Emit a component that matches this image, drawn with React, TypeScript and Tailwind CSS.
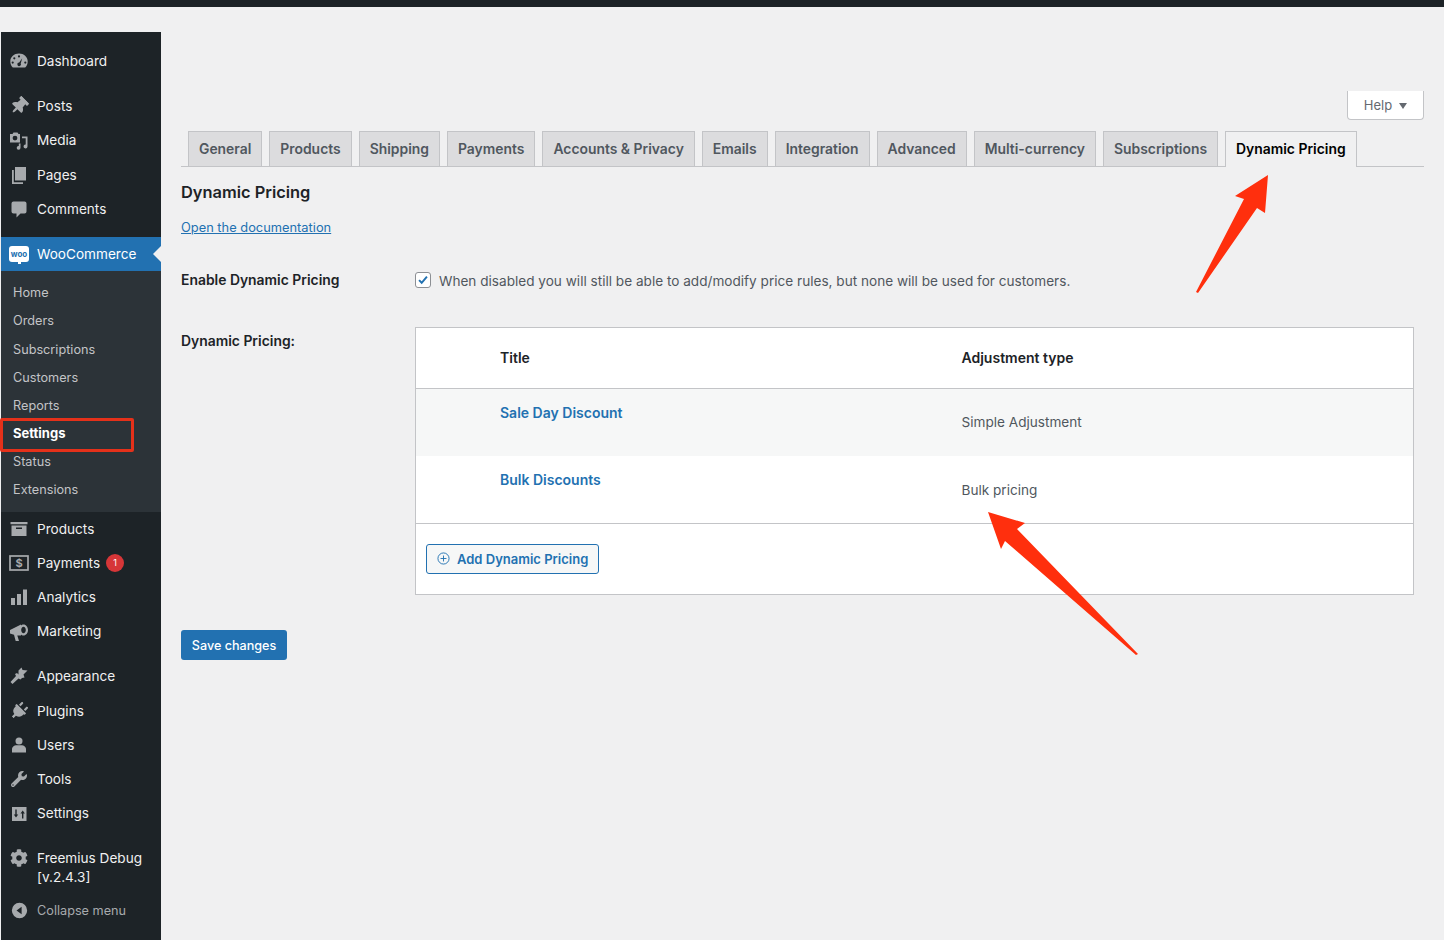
import type { ReactNode } from "react";
import { FaCog, FaPlug, FaThumbtack, FaWrench } from "react-icons/fa";

function Svg({ children }: { children: ReactNode }) {
  return (
    <svg viewBox="0 0 20 20" className="h-5 w-5 fill-[#a7aaad]">
      {children}
    </svg>
  );
}

const icons: Record<string, ReactNode> = {
  dashboard: (
    <Svg>
      <path
        fillRule="evenodd"
        d="M3.800 16.500C2.100 15 1.300 12.800 1.300 10.600 1.300 5.800 5.200 2.500 10 2.500s8.700 3.300 8.700 8.100c0 2.200-.8 4.400-2.500 5.900zM10 4.300a1.100 1.100 0 100 2.200 1.100 1.100 0 000-2.200zM5.300 6.200a1.100 1.100 0 100 2.200 1.100 1.100 0 000-2.200zM3.700 10.500a1.100 1.100 0 100 2.200 1.100 1.100 0 000-2.200zM16.300 10.500a1.100 1.100 0 100 2.200 1.100 1.100 0 000-2.200zM13.200 7.200l-3 4.300a1.800 1.800 0 101.500.9z"
      />
    </Svg>
  ),
  posts: <FaThumbtack className="h-[18px] w-[18px] rotate-45 text-[#a7aaad]" />,
  media: (
    <Svg>
      <path
        fillRule="evenodd"
        d="M1 3h2.500l1-1.500h4L9.500 3H11v8.500H1zM6 4.700a2.400 2.400 0 100 4.800 2.400 2.400 0 000-4.800z"
      />
      <path d="M13 5.500h5.500v10a2 2 0 11-1.800-2V7.300H13zM11.500 12.500v4.300a1.900 1.900 0 11-1.700-1.900v-2.400z" />
    </Svg>
  ),
  pages: (
    <Svg>
      <path d="M6 2h11v13.500H6z" />
      <path d="M3 5h1.800v12.200H14V19H3z" />
    </Svg>
  ),
  comments: (
    <Svg>
      <path d="M4.500 2.500h11a2 2 0 012 2v8a2 2 0 01-2 2H11.500L7.500 18.500v-4h-3a2 2 0 01-2-2v-8a2 2 0 012-2z" />
    </Svg>
  ),
  products: (
    <Svg>
      <path fillRule="evenodd" d="M1.500 3h17v2.300h-17zM2.500 6.500h15V17h-15zM7 8.500v1.500h6V8.500z" />
    </Svg>
  ),
  payments: (
    <svg viewBox="0 0 20 16" className="h-[16px] w-5">
      <rect x="1" y="1" width="18" height="14" fill="none" stroke="#a7aaad" strokeWidth="1.700" />
      <text x="10" y="12.200" textAnchor="middle" fontSize="11" fontWeight="700" fill="#a7aaad" fontFamily="Inter">
        $
      </text>
    </svg>
  ),
  analytics: (
    <Svg>
      <path d="M2 11h4v7H2zM8 7h4v11H8zM14 2.500h4V18h-4z" />
    </Svg>
  ),
  marketing: (
    <Svg>
      <path d="M1 8l11-5.500v11H8.300L10 19H6.700L5 12.800 1 11.500z" />
      <path
        fillRule="evenodd"
        d="M14.500 2.500c2.500 0 4.500 2.500 4.500 5.500s-2 5.500-4.500 5.500S10 11 10 8s2-5.500 4.500-5.500zM14.500 4.800c-1.300 0-2.300 1.400-2.300 3.200s1 3.200 2.300 3.200 2.300-1.400 2.300-3.200-1-3.200-2.300-3.200z"
      />
    </Svg>
  ),
  appearance: (
    <Svg>
      <path d="M9.500 4.500l3-3 1 2.500 5 .5-4 4 1 3-2.500.5-3.500-3.500zM8 7l5 5-1.500 1.500-2-1-6 5.500-2-2 5.500-6-1-2z" />
    </Svg>
  ),
  plugins: <FaPlug className="h-[18px] w-[18px] rotate-45 text-[#a7aaad]" />,
  users: (
    <Svg>
      <circle cx="10" cy="6" r="3.500" />
      <path d="M3 17.500V14c0-2.200 2.500-3.800 4.500-3.800h5c2 0 4.500 1.600 4.500 3.800v3.500z" />
    </Svg>
  ),
  tools: <FaWrench className="h-[16px] w-[16px] text-[#a7aaad]" />,
  settings: (
    <Svg>
      <path
        fillRule="evenodd"
        d="M3 3h14.500v14H3zM6.300 5.500v5H4.800l2.200 3 2.200-3H7.700v-5zM13 14.500v-5h-1.500l2.200-3 2.200 3h-1.500v5z"
      />
    </Svg>
  ),
  freemius: <FaCog className="h-[18px] w-[18px] text-[#a7aaad]" />,
};

function WooIcon() {
  return (
    <span className="relative flex h-[16px] w-[20px] items-center justify-center rounded-[3px] bg-white text-[8px] font-bold leading-none text-[#2271b1]">
      woo
      <span className="absolute -bottom-[2px] left-[9px] h-[4px] w-[3px] bg-white" />
    </span>
  );
}

function MenuRow({ icon, label, badge }: { icon: string; label: string; badge?: boolean }) {
  return (
    <div className="flex h-[34.2px] items-center text-[#f0f0f1]">
      <span className="flex w-[36px] shrink-0 items-center justify-center">{icons[icon]}</span>
      <span className="-translate-y-[0.5px]">{label}</span>
      {badge && (
        <span className="ml-[6px] flex h-[18px] w-[18px] items-center justify-center rounded-full bg-[#d63638] text-[9px] text-white">
          1
        </span>
      )}
    </div>
  );
}

function Sidebar() {
  const sub = ["Home", "Orders", "Subscriptions", "Customers", "Reports", "Settings", "Status", "Extensions"];
  return (
    <aside className="ml-px w-[160px] shrink-0 bg-[#1d2327] pt-[12px] text-[13.6px]">
      <MenuRow icon="dashboard" label="Dashboard" />
      <div className="mt-[11.2px]">
        <MenuRow icon="posts" label="Posts" />
        <MenuRow icon="media" label="Media" />
        <MenuRow icon="pages" label="Pages" />
        <MenuRow icon="comments" label="Comments" />
      </div>
      <div className="relative mt-[10.8px] flex h-[34px] items-center bg-[#2271b1] text-white">
        <span className="flex w-[36px] shrink-0 items-center justify-center">
          <WooIcon />
        </span>
        <span>WooCommerce</span>
        <span className="absolute right-0 top-[9px] h-0 w-0 border-y-[8px] border-r-[8px] border-y-transparent border-r-[#f0f0f1]" />
      </div>
      <div className="flex h-[241px] flex-col bg-[#2c3338] pb-[8.100px] pt-[7.900px] text-[12.7px] text-[#c3c4c7]">
        {sub.map((s) =>
          s === "Settings" ? (
            <div key={s} className="relative flex h-[28.100px] items-center pl-[12px] text-[13px] font-bold text-white">
              {s}
              <span className="absolute -left-px -top-[1.4px] h-[34px] w-[134px] rounded-[2px] border-[3px] border-[#e5311a]" />
            </div>
          ) : (
            <div key={s} className="flex h-[28.100px] items-center pl-[12px]">
              {s}
            </div>
          ),
        )}
      </div>
      <div>
        <MenuRow icon="products" label="Products" />
        <MenuRow icon="payments" label="Payments" badge />
        <MenuRow icon="analytics" label="Analytics" />
        <MenuRow icon="marketing" label="Marketing" />
      </div>
      <div className="mt-[10px]">
        <MenuRow icon="appearance" label="Appearance" />
      </div>
      <div className="mt-[1px]">
        <MenuRow icon="plugins" label="Plugins" />
        <MenuRow icon="users" label="Users" />
        <MenuRow icon="tools" label="Tools" />
        <MenuRow icon="settings" label="Settings" />
      </div>
      <div className="mt-[18px] flex text-[#f0f0f1]">
        <span className="flex h-[19px] w-[36px] shrink-0 items-center justify-center">{icons.freemius}</span>
        <span className="leading-[19px]">
          Freemius Debug
          <br />
          [v.2.4.3]
        </span>
      </div>
      <div className="mt-[14px] flex h-[20px] items-center text-[12.7px] text-[#a7aaad]">
        <span className="flex w-[36px] shrink-0 items-center justify-center">
          <svg viewBox="0 0 20 20" className="h-[17px] w-[17px] fill-[#a7aaad]">
            <path fillRule="evenodd" d="M10 1a9 9 0 110 18 9 9 0 010-18zM12.500 5.500L6.500 10l6 4.500z" />
          </svg>
        </span>
        Collapse menu
      </div>
    </aside>
  );
}

const tabs = [
  "General",
  "Products",
  "Shipping",
  "Payments",
  "Accounts & Privacy",
  "Emails",
  "Integration",
  "Advanced",
  "Multi-currency",
  "Subscriptions",
];

function Tabs() {
  return (
    <div className="mr-[20px] flex h-[36px] gap-[7px] border-b border-[#c3c4c7] pl-[7px]">
      {tabs.map((t) => (
        <div
          key={t}
          className="flex h-[36px] items-center border border-[#c3c4c7] bg-[#dcdcde] px-[10px] text-[13.9px] font-semibold text-[#50575e]"
        >
          {t}
        </div>
      ))}
      <div className="flex h-[36px] items-center border border-b-0 border-[#c3c4c7] bg-[#f0f0f1] px-[10px] pb-[1px] text-[13.9px] font-semibold text-black">
        Dynamic Pricing
      </div>
    </div>
  );
}

function PricingTable() {
  return (
    <div className="w-[999px] border border-[#c3c4c7] bg-white text-[14px]">
      <div className="flex h-[61px] items-center border-b border-[#c3c4c7] pb-[1px] font-semibold text-[#1d2327]">
        <span className="ml-[84px] w-[461.5px]">Title</span>
        <span>Adjustment type</span>
      </div>
      <div className="flex h-[67px] bg-[#f6f7f7]">
        <a className="ml-[84px] mt-[13px] w-[461.5px] font-semibold text-[#2271b1]">Sale Day Discount</a>
        <span className="mt-[23px] text-[13.6px] text-[#50575e]">Simple Adjustment</span>
      </div>
      <div className="flex h-[68px] border-b border-[#c3c4c7]">
        <a className="ml-[84px] mt-[13px] w-[461.5px] font-semibold text-[#2271b1]">Bulk Discounts</a>
        <span className="mt-[24px] text-[13.6px] text-[#50575e]">Bulk pricing</span>
      </div>
      <div className="flex h-[70px] items-center pb-[1px] pl-[10px]">
        <button className="flex h-[30px] w-[173px] items-center rounded-[3px] border border-[#2271b1] bg-[#f6f7f7] pl-[10px] pt-[2px] text-[13px] font-semibold text-[#2271b1]">
          <svg viewBox="0 0 14 14" className="mb-[3px] mr-[7px] h-[13px] w-[13px] fill-none stroke-[#2271b1]">
            <circle cx="7" cy="7" r="6" />
            <path d="M7 3.800v6.400M3.800 7h6.400" />
          </svg>
          Add Dynamic Pricing
        </button>
      </div>
    </div>
  );
}

function Main() {
  return (
    <main className="min-w-0 flex-1 pl-[20px]">
      <div className="mr-[20px] flex justify-end pt-[59px]">
        <button className="flex h-[29px] w-[77px] items-center justify-center gap-[7px] rounded-b-[4px] border border-t-0 border-[#c3c4c7] bg-white pt-[1px] text-[13px] text-[#646970]">
          Help
          <span className="h-0 w-0 border-x-[4px] border-t-[6px] border-x-transparent border-t-[#646970]" />
        </button>
      </div>
      <div className="mt-[11px]">
        <Tabs />
      </div>
      <h2 className="mt-[13px] text-[16.4px] font-semibold leading-[24px] text-[#1d2327]">Dynamic Pricing</h2>
      <a className="mt-[15px] block text-[12.85px] leading-[18px] text-[#2271b1] underline">Open the documentation</a>
      <div className="mt-[33px] flex items-start">
        <span className="w-[234px] text-[13.9px] font-semibold leading-[20px] text-[#1d2327]">Enable Dynamic Pricing</span>
        <span className="flex items-center text-[13.6px] leading-[20px] text-[#50575e]">
          <span className="mr-[8px] flex h-[16px] w-[16px] items-center justify-center rounded-[3px] border border-[#8c8f94] bg-white">
            <svg viewBox="0 0 16 16" className="h-[14px] w-[14px] fill-none stroke-[#2271b1] stroke-[2.200]">
              <path d="M3.500 8.200l3 3 6-7" />
            </svg>
          </span>
          <span className="translate-y-[1px]">
            When disabled you will still be able to add/modify price rules, but none will be used for customers.
          </span>
        </span>
      </div>
      <div className="mt-[37px] flex items-start">
        <span className="mt-[4px] w-[234px] text-[13.9px] font-semibold leading-[20px] text-[#1d2327]">Dynamic Pricing:</span>
        <PricingTable />
      </div>
      <button className="mt-[35px] flex h-[30px] w-[106px] items-center justify-center rounded-[3px] bg-[#2271b1] pt-[2px] text-[12.6px] font-medium text-white">
        Save changes
      </button>
    </main>
  );
}

export default function App() {
  return (
    <div className="relative h-[940px] w-[1444px] overflow-hidden bg-[#f0f0f1] font-['Inter',sans-serif]">
      <div className="h-[7px] bg-[#1d2327]" />
      <div className="flex h-[933px] pt-[25px]">
        <Sidebar />
        <Main />
      </div>
      {/* red annotation arrows drawn on top of the screenshot */}
      <svg viewBox="0 0 1444 940" className="pointer-events-none absolute left-0 top-0 h-[940px] w-[1444px]">
        <polygon points="1268,175 1265,213 1257,208 1198,293 1196,292 1244,199 1235,196" fill="#ff2f0d" />
        <polygon points="988,512 1025,523 1017,529 1138,654 1136,655 1005,541 1001,549" fill="#ff2f0d" />
      </svg>
    </div>
  );
}
